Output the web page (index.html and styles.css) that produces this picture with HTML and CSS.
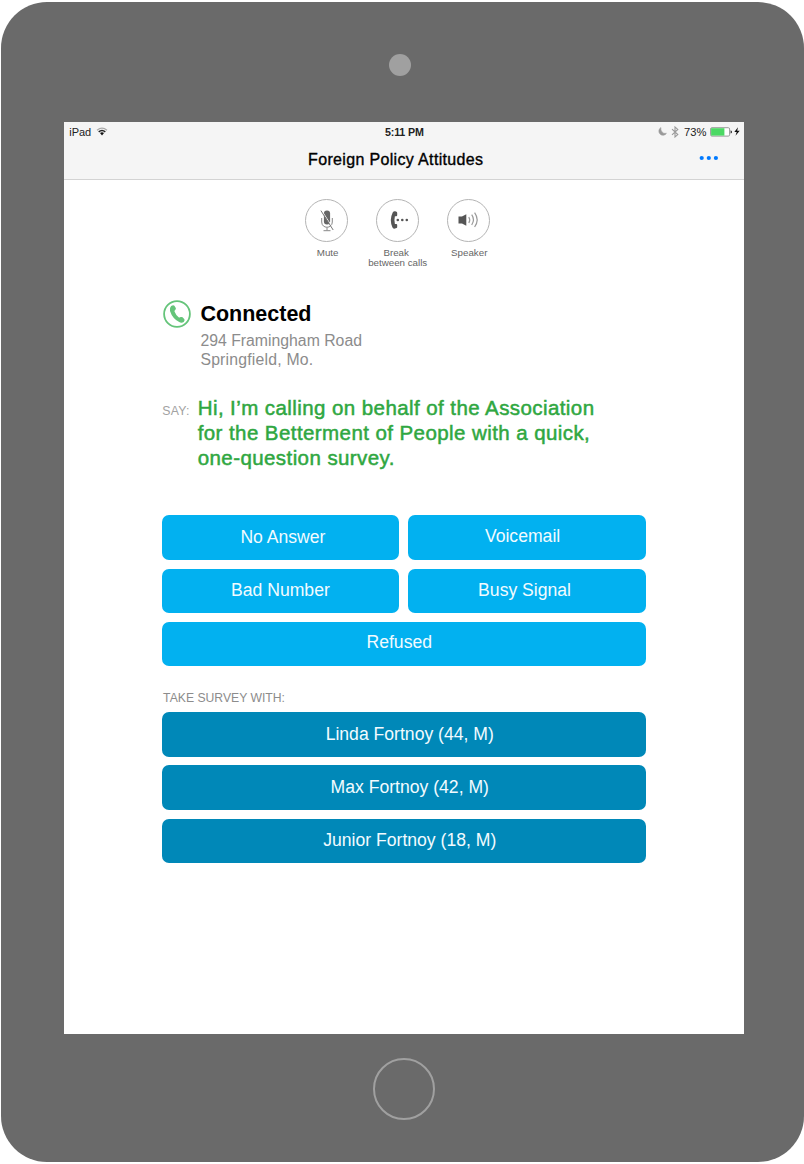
FILE: index.html
```html
<!DOCTYPE html>
<html lang="en">
<head>
<meta charset="utf-8">
<title>Foreign Policy Attitudes</title>
<link rel="stylesheet" href="styles.css">
</head>
<body>
<div class="device">
  <div class="bezel-top"><div class="camera"></div></div>
  <main class="screen">
    <header class="header">
      <div class="status">
        <div class="status-left">
          <span class="carrier">iPad</span>
          <svg class="wifi" width="12" height="9" viewBox="0 0 12 9" fill="none"><path d="M1 3.2Q6-.8 11 3.2" stroke="#aaa" stroke-width="1.2"/><path d="M2.7 4.9Q6 2.1 9.3 4.9" stroke="#222" stroke-width="1.4"/><path d="M4 6.1Q6 4.6 8 6.1L6 8.6Z" fill="#111"/></svg>
        </div>
        <div class="time">5:11 PM</div>
        <div class="status-right">
          <svg width="9" height="9" viewBox="0 0 9 9"><path d="M2.9 .6A4.1 4.1 0 1 0 8.4 6.4Q5.6 7 4 5Q2.3 3 2.9 .6Z" fill="#999" stroke="#999" stroke-width=".6"/></svg>
          <svg class="bluetooth" width="8" height="12" viewBox="0 0 8 12" fill="none" stroke="#999" stroke-width="1.1"><path d="M1 3.1L6.8 8.6L4 11V1L6.8 3.4L1 8.9"/></svg>
          <span class="percent">73%</span>
          <svg class="battery" width="22" height="10" viewBox="0 0 22 10"><rect x=".6" y=".7" width="19" height="8.4" rx="1.3" fill="#fff" stroke="#999"/><rect x="1.1" y="1.2" width="13.3" height="7.4" fill="#4cd964"/><path d="M20.6 3.2Q22 3.8 22 4.9Q22 6 20.6 6.6Z" fill="#222"/></svg>
          <svg class="bolt" width="6" height="9" viewBox="0 0 6 9"><path d="M4 .3L.3 5H2.7L1.5 8.7L5.7 3.8H3.2Z" fill="#111"/></svg>
        </div>
      </div>
      <div class="nav">
        <h1 class="title">Foreign Policy Attitudes</h1>
        <svg class="more" width="20" height="6" viewBox="0 0 20 6" fill="#007aff"><circle cx="2.7" cy="3" r="2.1"/><circle cx="9.8" cy="3" r="2.1"/><circle cx="16.9" cy="3" r="2.1"/></svg>
      </div>
    </header>

    <section class="controls">
      <div class="control">
        <div class="circle"><svg width="42" height="42" viewBox="0 0 42 42" fill="none"><rect x="17.9" y="11.5" width="6.2" height="14" rx="3" fill="#666"/><path d="M15.7 19V23C15.7 30 26.3 30 26.3 23V19M21 28.5V31.3M17.5 31.7H24.5" stroke="#888" stroke-width="1"/><path d="M15.8 11.6L28 30.8" stroke="#fff" stroke-width=".9"/><path d="M14.9 11.6L27.2 31" stroke="#777" stroke-width="1"/></svg></div>
        <span class="label label-mute">Mute</span>
      </div>
      <div class="control">
        <div class="circle"><svg width="42" height="42" viewBox="0 0 42 42" fill="#555"><path d="M18.2 12.3L19.5 12.8Q20.2 13.2 20.2 14V16.2Q20.2 17.2 19.2 17.2H17.9Q16.9 21 17.9 25H19.2Q20.2 25 20.2 26V28Q20.2 28.8 19.5 29.1L18 29.6Q16.5 30 15.5 28.5Q12 21 15.7 13.5Q16.8 11.8 18.2 12.3Z"/><circle cx="20.8" cy="21" r="1.3"/><circle cx="25.3" cy="21" r="1.3"/><circle cx="29.8" cy="21" r="1.3"/></svg></div>
        <span class="label"><span class="label-break">Break</span><br>between calls</span>
      </div>
      <div class="control">
        <div class="circle"><svg width="42" height="42" viewBox="0 0 42 42" fill="none"><path d="M11.5 17.5H15L19.3 15.2V26.7L15 24.4H11.5Z" fill="#555"/><path d="M21.8 18Q23.7 21 21.8 24M24.7 15.7Q28.2 20.8 24.7 26M27.6 13.7Q32.8 21 27.6 28" stroke="#999" stroke-width="1.2"/></svg></div>
        <span class="label label-speaker">Speaker</span>
      </div>
    </section>

    <section class="callee">
      <svg class="phone" width="28" height="28" viewBox="0 0 28 28"><circle cx="14" cy="14" r="12.9" fill="none" stroke="#65c47a" stroke-width="1.8"/><path d="M8.1 6Q10.4 4.5 11.4 5.7L12.8 8.1Q13.2 9 12.2 9.9Q11.3 10.7 11.5 11.6Q12.8 15 15.6 17.3Q16.6 17.8 17.7 17.1Q18.7 16.6 19.6 17.3L21.4 19.3Q22 20.6 20.7 21.9Q18.7 23.4 16.2 22.1Q9.4 18.5 7 11Q6.4 7.8 8.1 6Z" fill="#65c47a"/></svg>
      <div class="callee-text">
        <h2 class="state">Connected</h2>
        <p class="address">294 Framingham Road<br><span class="city">Springfield, Mo.</span></p>
      </div>
    </section>

    <section class="script">
      <span class="say">SAY:</span>
      <p class="prompt">Hi, I’m calling on behalf of the Association<br>for the Betterment of People with a quick,<br>one-question survey.</p>
    </section>

    <section class="outcomes">
      <button class="btn shift-right">No Answer</button>
      <button class="btn shift-left-more raised">Voicemail</button>
      <button class="btn">Bad Number</button>
      <button class="btn shift-left">Busy Signal</button>
      <button class="btn wide shift-left-more raised">Refused</button>
    </section>

    <h3 class="survey-title">TAKE SURVEY WITH:</h3>
    <section class="people">
      <button class="btn dark lowered">Linda Fortnoy (44, M)</button>
      <button class="btn dark">Max Fortnoy (42, M)</button>
      <button class="btn dark">Junior Fortnoy (18, M)</button>
    </section>
  </main>
  <div class="home"></div>
</div>
</body>
</html>
```

FILE: styles.css
```css
* { box-sizing: border-box; }
html, body { margin: 0; background: #fff; }
body {
  width: 804px;
  height: 1164px;
  padding: 1.7px 0 1.7px .5px;
  overflow: hidden;
  font-family: "Liberation Sans", Arial, sans-serif;
}
h1, h2, h3, p { margin: 0; }
svg { display: block; flex: none; }

.device {
  width: 803.5px;
  height: 1160.5px;
  border-radius: 46px;
  background: #6a6a6a;
  padding-left: 63px;
}
.bezel-top {
  height: 119.9px;
  padding: 52.3px 0 0 325.5px;
}
.camera { width: 22px; height: 22px; border-radius: 50%; background: #a0a0a0; }
.screen { width: 680.5px; height: 912.8px; background: #fff; }
.home {
  width: 62px;
  height: 62px;
  margin: 23.8px 0 0 309.5px;
  border: 2px solid #a0a0a0;
  border-radius: 50%;
}

.header { height: 58.4px; background: #f5f5f5; border-bottom: 1px solid #d3d3d3; }
.status {
  display: grid;
  grid-template-columns: 1fr auto 1fr;
  align-items: center;
  height: 20px;
  padding: 0 4.5px 0 5.7px;
  font-size: 11px;
  color: #222;
}
.status-left, .status-right { display: flex; align-items: center; }
.wifi { margin-left: 5px; }
.time { font-size: 10.7px; font-weight: 700; letter-spacing: -.15px; }
.status-right { justify-content: flex-end; }
.bluetooth { margin-left: 4px; }
.percent { margin-left: 5px; font-size: 11.2px; }
.battery { margin-left: 3px; }
.bolt { margin-left: 2px; }
.nav {
  display: grid;
  grid-template-columns: 1fr auto 1fr;
  align-items: center;
  height: 36.5px;
  padding: 0 25px 0 9px;
}
.title {
  grid-column: 2;
  font-size: 16px;
  font-weight: 400;
  letter-spacing: .34px;
  -webkit-text-stroke: .35px #000;
}
.more { justify-self: end; margin-bottom: 3px; }

.controls {
  display: flex;
  gap: 10.8px;
  padding: 19px 0 0 233.4px;
  height: 120.5px;
}
.control { display: flex; flex-direction: column; align-items: center; width: 60px; }
.circle {
  display: flex;
  align-items: center;
  justify-content: center;
  width: 43px;
  height: 43px;
  border: 1px solid #b4b4b4;
  border-radius: 50%;
}
.label {
  margin-top: 6px;
  font-size: 9.75px;
  line-height: 10.5px;
  color: #666;
  text-align: center;
  white-space: nowrap;
}
.label-mute { padding-left: 1.5px; }
.label-speaker { padding-left: 1.5px; }
.label-break { padding-right: 3px; }

.callee { display: flex; padding-left: 99.4px; height: 96px; }
.callee-text { padding-left: 9.5px; }
.state { font-size: 21.5px; line-height: 28px; color: #000; }
.address { margin-top: 4px; font-size: 15.8px; line-height: 18.5px; color: #8c8c8c; }
.city { letter-spacing: .2px; }

.script { display: flex; height: 119px; padding-left: 98.8px; }
.say { width: 35.4px; padding-top: 8px; font-size: 12.3px; line-height: 14px; color: #a2a2a2; letter-spacing: .2px; }
.prompt {
  font-size: 20.5px;
  line-height: 24.8px;
  letter-spacing: .42px;
  color: #2fa741;
  -webkit-text-stroke: .5px #2fa741;
  white-space: nowrap;
}

.outcomes {
  display: grid;
  grid-template-columns: 1fr 1fr;
  gap: 8.8px;
  margin: 0 98px;
}
.btn {
  height: 44.3px;
  padding: 0 0 1px;
  border: 0;
  border-radius: 7px;
  background: #02b1f0;
  color: #f2fbff;
  font-family: inherit;
  font-size: 17.6px;
}
.wide { grid-column: 1 / 3; }
.raised { padding-bottom: 2.4px; }
.shift-right { padding-left: 5px; }
.shift-left { padding-right: 5px; }
.shift-left-more { padding-right: 9px; }
.survey-title {
  height: 46.4px;
  padding: 24.5px 0 0 99.6px;
  font-size: 12.2px;
  line-height: 16px;
  font-weight: 400;
  color: #8c8c8c;
}
.people { display: grid; gap: 8.8px; margin: 0 98px; }
.dark { background: #0088b8; padding-left: 12px; }
.lowered { padding-bottom: 0; }
```
